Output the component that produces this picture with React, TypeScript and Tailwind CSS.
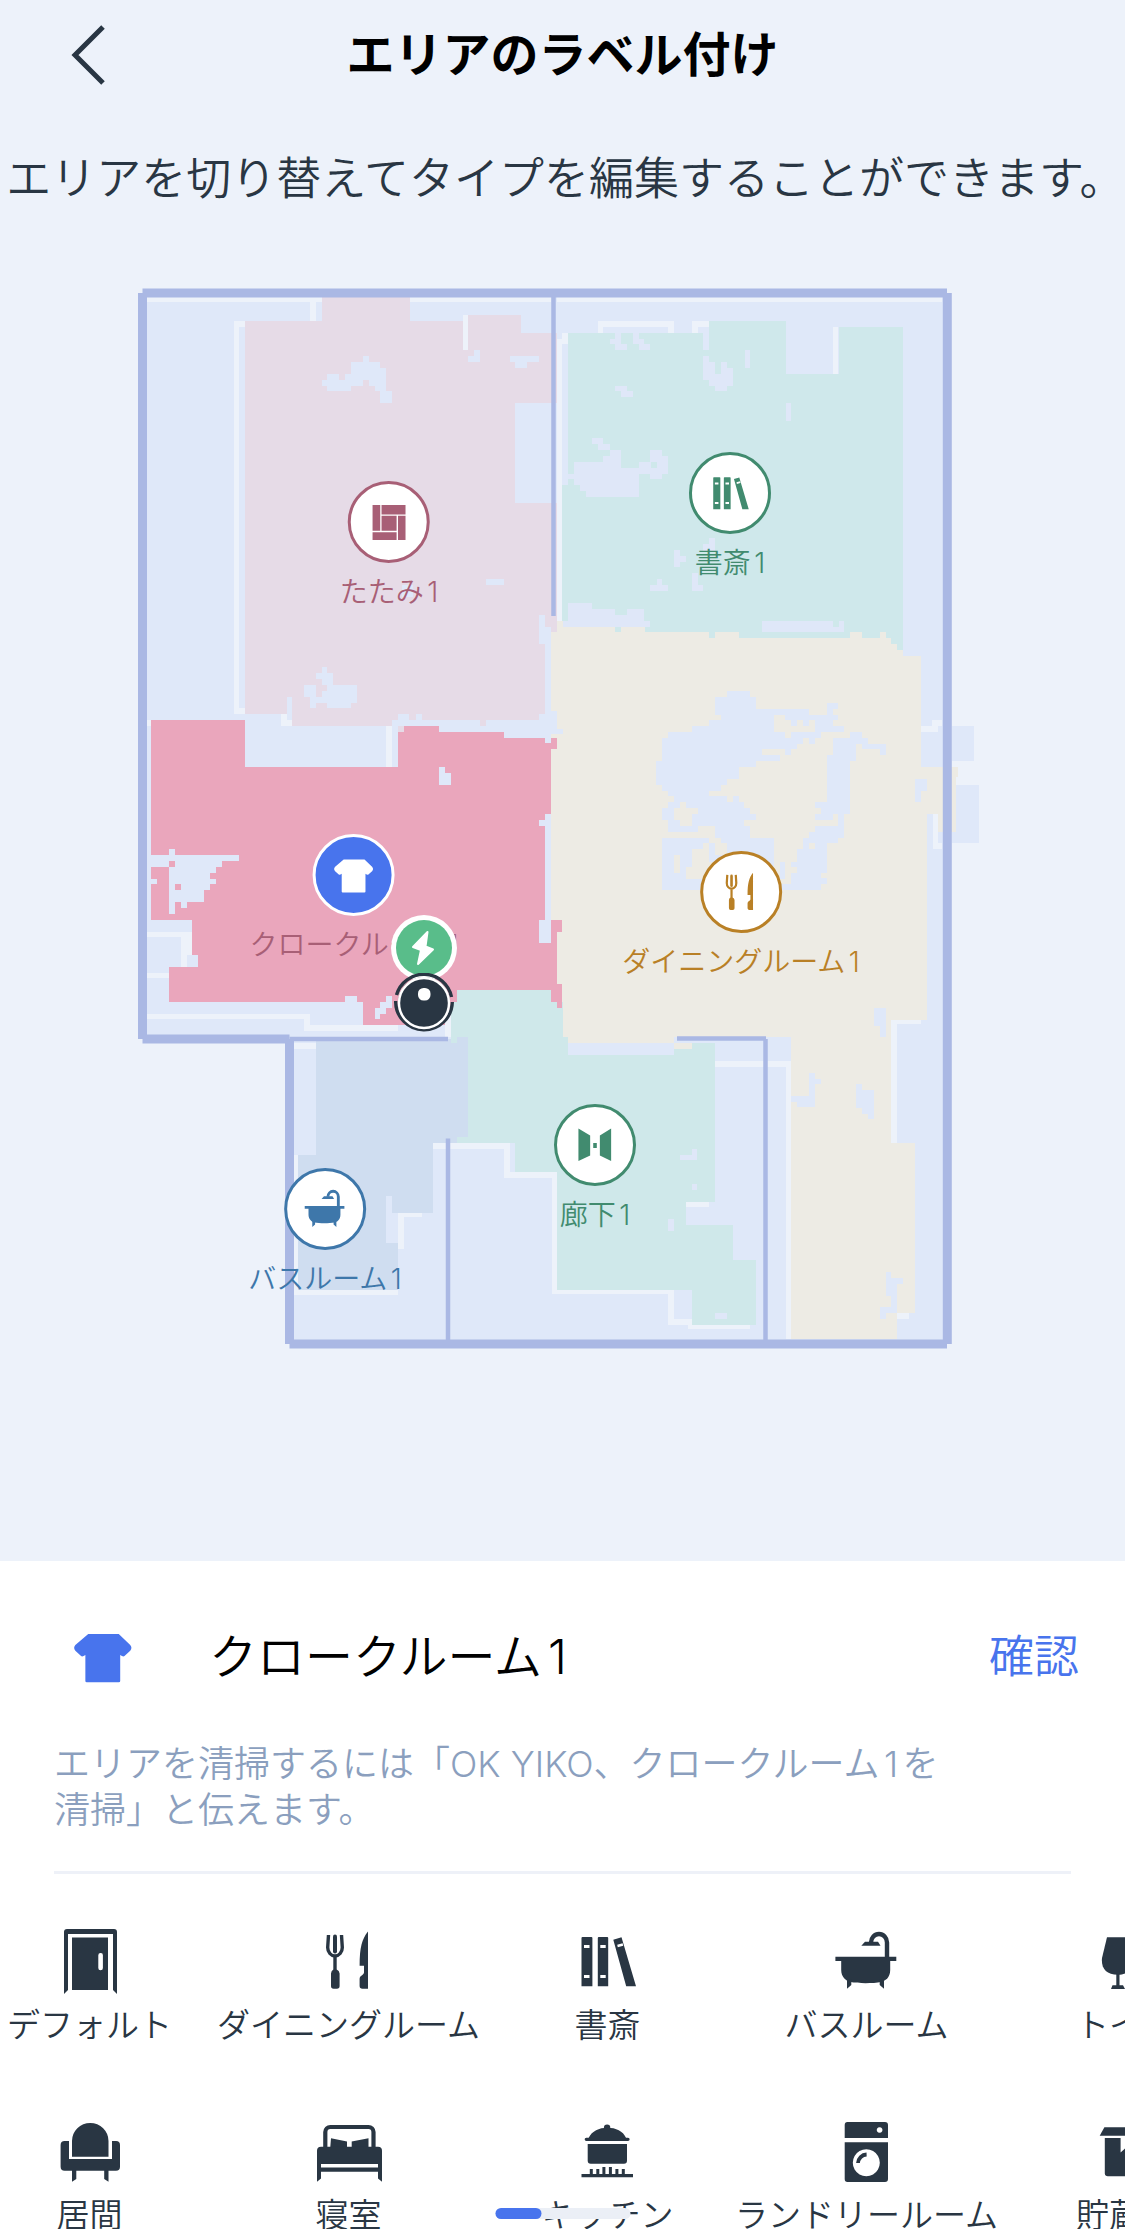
import { useState } from "react";
import type { ReactElement, ReactNode } from "react";

type IconName =
  | "door"
  | "dining"
  | "study"
  | "bath"
  | "toilet"
  | "living"
  | "bedroom"
  | "kitchen"
  | "laundry"
  | "storage"
  | "tatami"
  | "corridor"
  | "cloak";

const ICONS: Record<IconName, ReactNode> = {
  door: (
    <path
      fillRule="evenodd"
      d="M7 65V3a3 3 0 0 1 3-3H57a3 3 0 0 1 3 3V65L56 61V5H11V61ZM15 8.5H51V61H15ZM43.500 24a2.200 2.200 0 0 0-2.200 2.200V39a2.200 2.200 0 0 0 4.600 0V26.200A2.200 2.200 0 0 0 43.500 24Z"
    />
  ),
  dining: (
    <>
      <path d="M12.500 6L11.700 18.500a7.300 8.500 0 0 0 14.600 0L25.500 6" fill="none" stroke="currentColor" strokeWidth="3.4" />
      <path d="M19 7.500V22.500" fill="none" stroke="currentColor" strokeWidth="4" strokeLinecap="round" />
      <path d="M17.300 28H20.700V40.500a5 5 0 0 1 2.900 4V57a2.700 2.700 0 0 1-2.700 2.700H17.600A2.700 2.700 0 0 1 15 57V44.500a5 5 0 0 1 2.300-4Z" />
      <path d="M52 2.500C46 10 43.600 18 43.600 36.700H48V43.500C48 46 43.600 46.500 43.600 50V57a2.800 2.800 0 0 0 2.800 2.700H52Z" />
    </>
  ),
  study: (
    <path
      fillRule="evenodd"
      d="M7.500 8H16.400a1 1 0 0 1 1 1V57.300H6.500V9a1 1 0 0 1 1-1ZM9 16V19H14.500V16ZM9 46V49H14.500V46ZM23.800 8H32.200a1 1 0 0 1 1 1V57.300H22.800V9a1 1 0 0 1 1-1ZM25.300 16V19H30.700V16ZM25.300 46V49H30.700V46ZM38.300 10.700L46.500 8.300L61 57.300H51.200ZM42.200 15.700L42.800 18.300L48.200 16.800L47.600 14.200Z"
    />
  ),
  bath: (
    <>
      <path d="M2.400 27.700H63.300V32H57.200V41C57.200 49 52 52 48 53C40 54.600 25 54.600 17.500 53C13 52 8.200 48 8.200 41V32H2.400Z" />
      <path d="M14 50V59.700L18.300 56V51ZM51 50V59.700L46.700 56V51Z" />
      <path d="M54 28V13.500A8 8.500 0 0 0 38 13.500" fill="none" stroke="currentColor" strokeWidth="4.400" />
      <path d="M28.300 16.700L32 12.700H45L47.500 16.700Z" />
    </>
  ),
  toilet: (
    <>
      <path d="M14 8.300H36L40 28C42 38 36 45.700 25 45.700C13 45.700 8 39 9 29Z" />
      <path d="M23.300 45H26.500V56.300H30L32 60H18L19.500 56.300H23.300Z" />
      <path d="M44 20H56V60H44Z" />
    </>
  ),
  living: (
    <>
      <path d="M15 37.700V22A18.250 18 0 0 1 51.500 22V37.700Z" />
      <path d="M7.600 22H12V40H55V22H59a4 4 0 0 1 4 4V47.700a4 4 0 0 1-4 4H7.600a4 4 0 0 1-4-4V26a4 4 0 0 1 4-4Z" />
      <path d="M15 51V62.700L19.300 60V51ZM51.500 51V62.700L47.200 60V51Z" />
    </>
  ),
  bedroom: (
    <>
      <path d="M9.300 29V13a5 5 0 0 1 5-5H52.500a5 5 0 0 1 5 5V29" fill="none" stroke="currentColor" strokeWidth="4.200" />
      <path d="M14.300 28L15 19.300L31 22.500V28ZM35.700 28V22.500L52.500 19.300V28Z" />
      <path
        fillRule="evenodd"
        d="M1 62.700V31.700a4 4 0 0 1 4-4H62a4 4 0 0 1 4 4V62.700L62 59.500V52.700H5V59.500ZM5 45V48.500H62V45Z"
      />
    </>
  ),
  kitchen: (
    <>
      <circle cx="32.100" cy="8.800" r="3.200" />
      <path d="M13.700 18.700C17 12 24 8.700 32.300 8.700C41 8.700 48 12 51 18.700H53a1.600 1.600 0 0 1 0 3.300H11.300a1.600 1.600 0 0 1 0-3.300Z" />
      <path d="M12.700 25H52V41.700a3 3 0 0 1-3 3H15.700a3 3 0 0 1-3-3Z" />
      <path d="M6.500 55H14.800V50H17.800V55H21.300V50H24.300V55H27.400V48H30.400V55H33.900V48H36.900V55H40.400V50H43.400V55H46.800V50H49.800V55H58V58.200H6.500Z" />
    </>
  ),
  laundry: (
    <>
      <path
        fillRule="evenodd"
        d="M14 3H51a3 3 0 0 1 3 3V19H10.700V6a3 3 0 0 1 3.300-3ZM45.600 8.200a2.800 2.800 0 1 0 .01 0ZM10.700 23.300H54V60a3 3 0 0 1-3 3H14a3 3 0 0 1-3.300-3ZM32.300 30.200a13.500 13.500 0 1 0 .01 0Z"
      />
      <path d="M24 44A9 9 0 0 1 32.600 35.500" fill="none" stroke="currentColor" strokeWidth="3.800" />
    </>
  ),
  storage: (
    <>
      <path d="M11.400 8.300H54.600L59.300 16.700H6.700Z" />
      <path d="M11.800 19H27.600V33.500L33 28.500L38.400 33.500V19H54.200V54.500a3 3 0 0 1-3 2.800H14.800a3 3 0 0 1-3-2.800Z" />
    </>
  ),
  tatami: (
    <path d="M7.400 6.300H19.200V45.800H7.400ZM21.200 6.300H58V20.700H21.200ZM21.200 22.700H44.300V45.800H21.200ZM46.500 22.700H58V59.700H46.500ZM7.400 47.900H44.300V59.700H7.400Z" />
  ),
  corridor: <path d="M6.800 6.800L24.800 17.600V48.400L6.800 56.600ZM57 6.800L39.700 17.600V48.400L57 56.600ZM29.500 29H35V37H29.500Z" />,
  cloak: (
    <path d="M17 8.400H49L61 20Q63.500 23 61 26L55 31.500Q53.500 32.500 50.500 30.500V57.500Q50.500 59 49 59H15.500Q14 59 14 57.500V30.500Q11 32.500 9.500 31.500L3.500 26Q1 23 3.500 20Z" />
  ),
};

function Icon({ name, className }: { name: IconName; className: string }): ReactElement {
  return (
    <svg viewBox="0 0 66 66" fill="currentColor" className={className} aria-hidden="true">
      {ICONS[name]}
    </svg>
  );
}

interface Area {
  id: string;
  label: string;
  icon: IconName;
  x: number;
  y: number;
  color: string;
}

// pin centres, in floor plan units
const MAP = { top: 211, width: 1125, height: 1350 };

const AREAS: Area[] = [
  { id: "tatami", label: "たたみ1", icon: "tatami", x: 389, y: 522, color: "text-[#a85f76]" },
  { id: "study", label: "書斎1", icon: "study", x: 730, y: 493, color: "text-[#418b6f]" },
  { id: "dining", label: "ダイニングルーム1", icon: "dining", x: 741, y: 892, color: "text-[#b98026]" },
  { id: "corridor", label: "廊下1", icon: "corridor", x: 595, y: 1145, color: "text-[#418b6f]" },
  { id: "bath", label: "バスルーム1", icon: "bath", x: 325, y: 1209, color: "text-[#3e77aa]" },
  { id: "cloak", label: "クロークルーム1", icon: "cloak", x: 354, y: 875, color: "text-[#a85f76]" },
];

const TYPES: { label: string; icon: IconName }[] = [
  { label: "デフォルト", icon: "door" },
  { label: "ダイニングルーム", icon: "dining" },
  { label: "書斎", icon: "study" },
  { label: "バスルーム", icon: "bath" },
  { label: "トイレ", icon: "toilet" },
  { label: "居間", icon: "living" },
  { label: "寝室", icon: "bedroom" },
  { label: "キッチン", icon: "kitchen" },
  { label: "ランドリールーム", icon: "laundry" },
  { label: "貯蔵室", icon: "storage" },
];

function position(x: number, y: number): { left: string; top: string } {
  return {
    left: `${String((x / MAP.width) * 100)}%`,
    top: `${String(((y - MAP.top) / MAP.height) * 100)}%`,
  };
}

// Each group is one scan tile, three units to a plan unit.
function FloorPlan(): ReactElement {
  return (
    <svg viewBox="0 211 1125 1350" className="block w-full" shapeRendering="crispEdges" aria-hidden="true">
      <path fill="#dfe8f9" d="M143 293H947V1344H290V1039H143Z" />

      <g transform="translate(130 270) scale(.33333)">
        <path
          fill="#edf2fa"
          d="M51 82H575V96H558V153H540V96H51ZM840 82H1264V96H840ZM311 153H346V170H328V1315H346V1332H311ZM452 1332H470V1350H487V1368H452ZM768 1368H786V1491H768ZM51 1350H64V1368H51Z"
        />
        <path
          fill="#e6dbe7"
          d="M575 82H840V153H998V136H1174V188H1280V1085H1262V1070H1245V1034H1227V1122H1245V1332H1227V1350H1068V1368H1050V1350H875V1332H858V1350H838V1332H803V1350H786V1368H487V1280H470V1332H346V153H575Z"
        />
        <path fill="#edf2fa" d="M998 136H1015V241H998Z" />
        <path
          fill="#dfe8f9"
          d="M1156 400H1280V698H1156ZM575 329H592V312H628V329H645V312H663V276H698V259H716V276H751V294H768V364H786V400H751V364H734V347H716V329H698V347H663V364H592V347H575ZM1033 241H1050V276H1015V259H1033ZM1139 259H1227V276H1191V294H1156V276H1139ZM1068 928H1121V945H1068ZM815 945H850V980H815ZM575 1192H592V1210H610V1245H681V1298H663V1315H592V1298H558V1315H540V1280H522V1245H558V1280H575V1262H592V1245H575V1227H558V1210H575Z"
        />
      </g>

      <g transform="translate(530 270) scale(.33333)">
        <path fill="#dfe8f9" d="M80 82H1237V188H80Z" />
        <path
          fill="#cfe8eb"
          d="M115 188H520V241H538V153H768V311H926V170H1119V1140H97V645H115Z"
        />
        <path
          fill="#edf2fa"
          d="M80 82H1237V96H80ZM97 188H115V223H97V1052H80V206H97ZM204 153H432V188H415V170H220V188H204ZM485 153H538V170H503V188H485ZM908 170H924V311H908ZM1207 1350H1237V1368H1225V1385H1172V1368H1207Z"
        />
        <path
          fill="#dfe7f8"
          d="M256 188H273V223H291V241H256V223H239V206H256ZM308 188H326V206H343V223H361V241H326V223H308ZM520 259H538V276H555V311H573V276H591V294H608V347H591V364H555V347H538V329H520ZM644 241H660V294H644ZM768 400H784V452H768ZM256 347H291V364H308V382H273V364H256ZM186 505H220V523H239V540H273V593H326V576H361V540H397V558H414V611H397V628H361V611H326V681H168V663H150V645H132V628H115V611H132V576H220V558H239V540H204V523H186ZM538 804H555V845H520V822H538ZM432 840H449V857H467V875H449V892H432ZM380 928H397V945H414V963H361V945H380ZM485 910H503V945H520V963H485ZM115 998H186V1016H256V1034H291V1016H343V1052H361V1070H97V1052H115ZM697 1052H908V1070H926V1052H943V1087H697Z"
        />
        <path fill="#cfe8eb" d="M363 576H380V593H363Z" />
      </g>

      <g transform="translate(540 600) scale(.33333)">
        <path fill="#dfe8f9" d="M1236 378H1301V484H1236ZM1236 554H1318V730H1236Z" />
        <path
          fill="#edebe4"
          d="M50 62H68V80H226V97H243V80H315V97H508V114H525V97H596V114H930V97H966V114H1019V97H1037V114H1054V132H1072V150H1089V167H1142V502H1253V532H1247V695H1195V643H1160V1260H1054V1630H1126V2140H1072V2218H754V1312H402V1330H85V1312H68V1205H50V960H32V97H50Z"
        />
        <path
          fill="#dfe8f9"
          d="M32 332H50V386H68V403H32ZM561 272H631V290H648V326H807V344H860V308H895V326H879V344H895V361H879V379H913V397H842V414H826V431H807V414H789V431H771V448H754V466H736V448H666V466H719V484H648V502H596V536H561V554H543V572H508V589H561V607H578V589H596V607H613V625H631V643H648V660H613V678H631V713H701V870H366V713H508V730H525V765H561V730H543V713H525V678H473V695H384V660H366V625H384V607H402V589H384V572H366V554H349V484H366V414H384V397H455V379H508V361H543V344H525V290H561Z"
        />
        <path
          fill="#dfe8f9"
          d="M930 397H966V414H984V431H1037V466H1019V448H966V431H948V484H930V643H913V713H895V730H860V818H842V835H860V853H842V870H701V853H754V818H771V801H754V785H771V748H789V713H807V695H826V678H895V643H879V660H826V643H842V625H826V607H860V466H879V414H930ZM719 785H736V837H719ZM1124 536H1160V572H1142V607H1124ZM1001 1223H1037V1312H1019V1277H1001ZM807 1418H825V1436H843V1453H825V1522H772V1505H754V1488H807ZM948 1453H966V1471H1001V1558H983V1541H966V1523H948ZM1037 2017H1054V2034H1089V2052H1072V2140H1037V2157H1019V2122H1054V2087H1037Z"
        />
        <path
          fill="#edebe4"
          d="M701 344H736V361H754V379H771V361H789V379H807V361H826V397H754V414H736V397H701ZM420 607H437V625H473V643H455V678H420V660H402V625H420ZM402 765H419V818H402ZM455 748H490V730H508V785H525V837H437V801H455ZM807 730H825V748H807Z"
        />
        <path
          fill="#cfe8ea"
          d="M-249 1171H50V1205H68V1312H85V1364H402V1330H526V1805H438V1876H579V1980H648V2175H455V2069H50V1717H-74V1628H-267V1206H-249Z"
        />
        <path fill="#edebe4" d="M402 1330H455V1347H402Z" />
        <path
          fill="#edf2fa"
          d="M1178 643H1195V730H1207V748H1178ZM1054 1260H1142V1271H1071V1630H1054ZM1072 2140H1107V2157H1072ZM525 1382H754V2218H738V1400H525ZM-320 1628H-91V1717H50V2069H401V2157H455V2175H630V2187H443V2175H385V2081H37V1735H-108V1646H-320ZM438 1805H507V1822H438Z"
        />
        <path
          fill="#dfe7f8"
          d="M456 1647H472V1681H420V1664H456ZM456 1752H472V1770H456ZM385 1858H401V1893H385ZM526 2140H560V2157H526Z"
        />
        <path
          fill="#cfddf0"
          d="M-672 1317H-267V1328H-249V1312H-215V1611H-250V1628H-320V1840H-443V1787H-461V1928H-426V2069H-726V1664H-672Z"
        />
        <path
          fill="#edf2fa"
          d="M-738 1329H-672V1346H-738ZM-738 1664H-726V2069H-426V2085H-738ZM-426 1840H-355V1852H-409V1946H-426Z"
        />
      </g>

      <g transform="translate(130 690) scale(.33333)">
        <path
          fill="#eaa6bc"
          d="M64 91H346V231H804V126H821V108H928V126H1121V143H1245V160H1262V143H1280V178H1262V373H1245V391H1227V408H1245V690H1227V760H1262V690H1297V725H1280V883H1297V953H1280V936H1262V901H981V936H963V1005H698V936H681V918H645V936H117V830H204V795H187V690H64Z"
        />
        <path
          fill="#dfe8f9"
          d="M64 496H117V478H135V496H328V513H275V531H258V548H240V566H258V583H240V601H222V636H170V654H152V636H135V672H117V531H64ZM64 566H81V583H64ZM928 231H945V249H963V284H928ZM768 918H786V953H768V971H751V988H734V953H751V936H768Z"
        />
        <path fill="#e6dbe7" d="M804 108H821V126H804Z" />
        <path fill="#eaa6bc" d="M117 513H135V531H117ZM135 583H152V601H135Z" />
        <path
          fill="#edf2fa"
          d="M51 725H187V795H170V830H152V742H51ZM51 848H117V865H51ZM51 971H540V1005H804V1023H522V988H51ZM945 960H963V1040H945Z"
        />
      </g>

      <g stroke="#aab8e4" fill="none" shapeRendering="auto">
        <path
          strokeWidth="9"
          d="M142.500 293H947M142.500 293V1039M142.500 1039H289.500M289.500 1039V1344M289.500 1344H947M947.300 293V1344"
        />
        <path strokeWidth="4.500" d="M553.500 297V616M289.500 1039H448M448 1138.500V1340M677 1038.500H766M765.500 1039V1340" />
      </g>
    </svg>
  );
}

function Markers(): ReactElement {
  return (
    <>
      <svg
        viewBox="0 0 66 66"
        className="absolute h-[66px] w-[66px] -translate-x-1/2 -translate-y-1/2"
        style={position(424, 948)}
        role="img"
        aria-label="充電ステーション"
      >
        <circle cx="33" cy="33" r="33" fill="#fff" />
        <circle cx="33" cy="33" r="28" fill="#59bd8a" />
        <path
          d="M36.500 17L22 32L30 35L27 49L42 34.500L34.500 31.500Z"
          fill="#fff"
          stroke="#fff"
          strokeWidth="2"
          strokeLinejoin="round"
        />
      </svg>
      <svg
        viewBox="0 0 60 60"
        className="absolute h-[60px] w-[60px] -translate-x-1/2 -translate-y-1/2"
        style={position(424, 1003)}
        role="img"
        aria-label="ロボット"
      >
        <circle cx="30" cy="30" r="26" fill="#293643" />
        <path
          d="M2.500 22A28.300 28.300 0 0 1 57.500 24M1.700 28A28.300 28.300 0 1 0 58.300 29"
          fill="none"
          stroke="#293643"
          strokeWidth="3.400"
        />
        <circle cx="30" cy="30" r="25" fill="none" stroke="#fff" strokeWidth="2.400" />
        <rect x="24" y="15" width="12.500" height="12.500" rx="5.500" fill="#fff" />
      </svg>
    </>
  );
}

export default function App(): ReactElement {
  const [selectedId, setSelectedId] = useState("cloak");
  const selected = AREAS.find((area) => area.id === selectedId) ?? AREAS[0];

  return (
    <div className="flex h-screen flex-col overflow-hidden bg-[#edf2fa] font-[Inter,'Noto_Sans_CJK_JP',sans-serif] font-[350] text-[#293643] [text-autospace:normal]">
      <header className="relative flex h-[110px] shrink-0 items-center justify-center">
        <button type="button" aria-label="戻る" className="absolute left-[60px] p-2">
          <svg viewBox="0 0 40 60" className="h-[60px] w-10" fill="none" stroke="currentColor" strokeWidth="5">
            <path d="M35 2L7 30L35 58" />
          </svg>
        </button>
        <h1 className="text-[48px] leading-[72px] font-bold text-black">エリアのラベル付け</h1>
      </header>

      <p className="mt-9 shrink-0 pl-1.5 text-center text-[45px] leading-[65px] whitespace-nowrap">
        エリアを切り替えてタイプを編集することができます。
      </p>

      <main className="relative shrink-0">
        <FloorPlan />
        {AREAS.map((area) => {
          const active = area.id === selectedId;
          return (
            <button
              key={area.id}
              type="button"
              aria-pressed={active}
              onClick={() => {
                setSelectedId(area.id);
              }}
              className={`absolute flex -translate-x-1/2 -translate-y-[41px] flex-col items-center gap-2 ${area.color}`}
              style={position(area.x, area.y)}
            >
              <span
                className={`flex size-[82px] items-center justify-center rounded-full border-3 ${
                  active ? "border-white bg-[#4874ed] text-white" : "border-current bg-white"
                }`}
              >
                <Icon name={area.icon} className="size-[43px]" />
              </span>
              <span className="text-[28px] leading-[42px] whitespace-nowrap">{area.label}</span>
            </button>
          );
        })}
        <Markers />
      </main>

      <section className="relative flex min-h-0 grow flex-col bg-white pt-[60px]">
        <div className="flex h-[72px] shrink-0 items-center pr-[46px] pl-[72px]">
          <Icon name={selected.icon} className="size-[63px] text-[#4874ed]" />
          <h2 className="ml-[74px] grow text-[48px] leading-[72px] text-black">{selected.label}</h2>
          <button type="button" className="text-[45px] leading-[72px] text-[#4874ed]">
            確認
          </button>
        </div>
        <p className="mx-[54px] mt-12 shrink-0 border-b-3 border-[#eef1f8] pb-[38px] text-[36px] leading-[46px] text-[#8b9fbe]">
          エリアを清掃するには「OK YIKO、{selected.label}を
          <br />
          清掃」と伝えます。
        </p>

        <div className="mt-[55px] min-h-0 overflow-hidden">
          <div className="-ml-10 grid grid-cols-[repeat(5,259px)] justify-items-center gap-y-[70px]">
            {TYPES.map((type) => (
              <button key={type.label} type="button" className="flex w-max flex-col items-center gap-1.5">
                <Icon name={type.icon} className="size-[66px]" />
                <span className="text-[33px] leading-[48px] whitespace-nowrap">{type.label}</span>
              </button>
            ))}
          </div>
        </div>

        <div className="absolute bottom-[10px] left-1/2 h-[11px] w-[135px] -translate-x-1/2 rounded-full bg-[#ebeff6]">
          <div className="h-full w-[46px] rounded-full bg-[#4874ed]" />
        </div>
      </section>
    </div>
  );
}
